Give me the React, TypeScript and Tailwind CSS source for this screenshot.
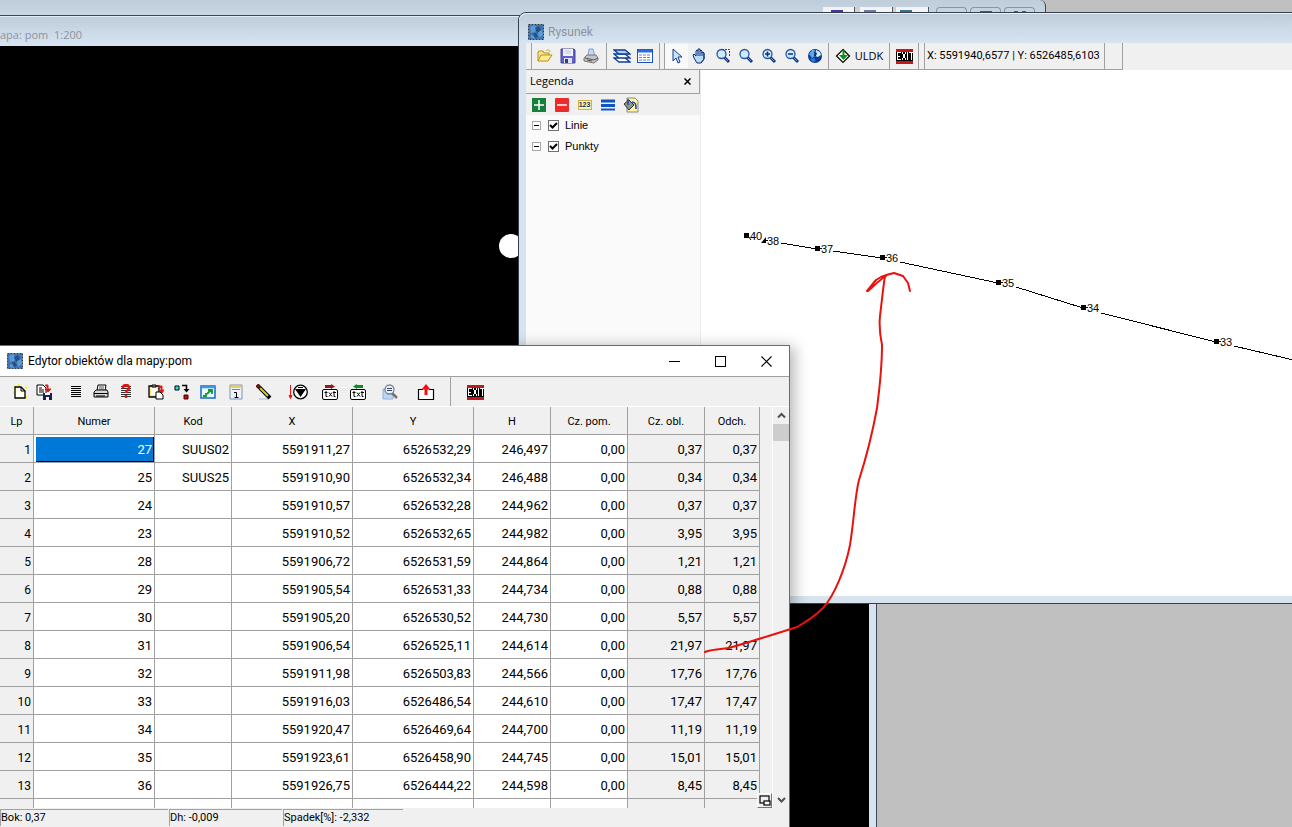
import type { ReactNode } from 'react'

type Row = {
  numer: string
  kod?: string
  x: string
  y: string
  h: string
  pom: string
  obl: string
  odch: string
}

const rows: Row[] = [
  { numer: '27', kod: 'SUUS02', x: '5591911,27', y: '6526532,29', h: '246,497', pom: '0,00', obl: '0,37', odch: '0,37' },
  { numer: '25', kod: 'SUUS25', x: '5591910,90', y: '6526532,34', h: '246,488', pom: '0,00', obl: '0,34', odch: '0,34' },
  { numer: '24', x: '5591910,57', y: '6526532,28', h: '244,962', pom: '0,00', obl: '0,37', odch: '0,37' },
  { numer: '23', x: '5591910,52', y: '6526532,65', h: '244,982', pom: '0,00', obl: '3,95', odch: '3,95' },
  { numer: '28', x: '5591906,72', y: '6526531,59', h: '244,864', pom: '0,00', obl: '1,21', odch: '1,21' },
  { numer: '29', x: '5591905,54', y: '6526531,33', h: '244,734', pom: '0,00', obl: '0,88', odch: '0,88' },
  { numer: '30', x: '5591905,20', y: '6526530,52', h: '244,730', pom: '0,00', obl: '5,57', odch: '5,57' },
  { numer: '31', x: '5591906,54', y: '6526525,11', h: '244,614', pom: '0,00', obl: '21,97', odch: '21,97' },
  { numer: '32', x: '5591911,98', y: '6526503,83', h: '244,566', pom: '0,00', obl: '17,76', odch: '17,76' },
  { numer: '33', x: '5591916,03', y: '6526486,54', h: '244,610', pom: '0,00', obl: '17,47', odch: '17,47' },
  { numer: '34', x: '5591920,47', y: '6526469,64', h: '244,700', pom: '0,00', obl: '11,19', odch: '11,19' },
  { numer: '35', x: '5591923,61', y: '6526458,90', h: '244,745', pom: '0,00', obl: '15,01', odch: '15,01' },
  { numer: '36', x: '5591926,75', y: '6526444,22', h: '244,598', pom: '0,00', obl: '8,45', odch: '8,45' },
]

const columns = [
  { label: 'Lp', width: 'w-[34px]' },
  { label: 'Numer', width: 'w-[121px]' },
  { label: 'Kod', width: 'w-[77px]' },
  { label: 'X', width: 'w-[121px]' },
  { label: 'Y', width: 'w-[121px]' },
  { label: 'H', width: 'w-[77px]' },
  { label: 'Cz. pom.', width: 'w-[77px]' },
  { label: 'Cz. obl.', width: 'w-[77px]' },
  { label: 'Odch.', width: 'w-[55px]' },
]

const points = [
  { label: '37', x: 818, y: 249 },
  { label: '36', x: 883, y: 258 },
  { label: '35', x: 999, y: 283 },
  { label: '34', x: 1084, y: 308 },
  { label: '33', x: 1217, y: 342 },
]

function Icon({ children, size = 16 }: { children: ReactNode; size?: number }) {
  return (
    <svg width={size} height={size} viewBox={`0 0 ${size} ${size}`} fill="none" aria-hidden="true" className="shrink-0">
      {children}
    </svg>
  )
}

function AppIcon() {
  return (
    <Icon>
      <rect width="16" height="16" fill="#3f74b0" />
      <path d="M2 3l4-2 3 3-2 4-4 1zM10 8l4-2 1 5-4 3zM3 11l3 1 1 3-4-1z" fill="#5b9ad6" />
      <path d="M7 4l4-2 2 4-4 3zM5 9l3 0 2 4-3 1z" fill="#234f86" />
      <rect x="0.5" y="0.5" width="15" height="15" stroke="#1f3c5e" strokeDasharray="2 1" />
      <rect x="0.5" y="0.5" width="15" height="15" stroke="#b9a98a" strokeDasharray="1 2" strokeDashoffset="1" />
    </Icon>
  )
}

function ExitIcon() {
  return (
    <svg width="17" height="16" viewBox="0 0 17 16" fill="none" aria-hidden="true" shapeRendering="crispEdges">
      <rect y="1" width="17" height="14" fill="#000" />
      <path d="M0 2h17M0 14h17" stroke="#c4161c" strokeWidth="3" />
      <path d="M1 4.500h4M1 8h3M1 11.500h4M1.500 4v8M6 4l4 8M10 4l-4 8M11.500 4v8M13 4.500h4M15 4v8" stroke="#fff" />
    </svg>
  )
}

function Magnifier({ children }: { children?: ReactNode }) {
  return (
    <Icon>
      <path d="M9 9l5 5" stroke="#123a7a" strokeWidth="3" />
      <path d="M9.500 9.500l3.500 3.500" stroke="#6b94cf" />
      <circle cx="6.500" cy="6" r="4.500" fill="#cfe8fb" stroke="#2456a4" strokeWidth="1.300" />
      {children}
    </Icon>
  )
}

const OpenIcon = () => (
  <Icon>
    <path d="M1 13V4l1-1h4l1 2h5v2" fill="#fbe58c" stroke="#bb8e16" />
    <path d="M1 13l3-6h11l-4 6z" fill="#ffec94" stroke="#bb8e16" />
    <path d="M9 3c2-2 4-1 4 1" stroke="#d7a928" />
  </Icon>
)

const SaveIcon = () => (
  <Icon>
    <path d="M1 1h13l1 1v13H1z" fill="#6260c4" stroke="#46449c" />
    <path d="M3 1h10v7H3z" fill="#eef0fa" />
    <path d="M5 3h6M5 5h6" stroke="#c3c6da" />
    <path d="M4 10h8v5H4z" fill="#dfe1ef" />
    <path d="M5 11h3v4H5z" fill="#3b3987" />
  </Icon>
)

const PrintIcon = () => (
  <Icon>
    <path d="M5 8l1-7h4l2 7z" fill="#c3d6ff" stroke="#8a9fc9" />
    <path d="M1 10l3-3h9l2 3v2l-4 3-10-2z" fill="#c4c4c4" stroke="#777" />
    <path d="M2 10l9 2 4-2M4 12l5 1" stroke="#555" />
  </Icon>
)

const LayersIcon = () => (
  <svg width="18" height="16" viewBox="0 0 18 16" fill="none" aria-hidden="true">
    <path d="M1 10h11l5 4H6zM1 6h11l5 4H6z" fill="#fff" stroke="#0f3c94" strokeWidth="1.300" />
    <path d="M1 2h11l5 4H6z" fill="#a9d1f4" stroke="#0f3c94" strokeWidth="1.300" />
  </svg>
)

const GridIcon = () => (
  <Icon>
    <rect x="0.500" y="1.500" width="15" height="13" fill="#fff" stroke="#1a53b5" />
    <path d="M1 3h14" stroke="#2a6be0" strokeWidth="3" />
    <path d="M2 7h12M2 9.500h12M2 12h12" stroke="#5f86c8" strokeDasharray="3 1" />
  </Icon>
)

const CursorIcon = () => (
  <Icon>
    <path d="M4 1v12l3-3 2 5 2-1-2-5h4z" fill="#c9e4ff" stroke="#123d8c" />
  </Icon>
)

const HandIcon = () => (
  <Icon>
    <path d="M5 15l-3-5-1-3 1-1 2 2V3l1-1 1 1V1h2v2l1-1 1 1v2l1-1 1 1v6l-3 4z" fill="#b9dcfa" stroke="#0e2f78" />
    <path d="M6 3v5M8 3v5M10 4v4M12 5v6l-3 4" stroke="#0e2f78" />
  </Icon>
)

const GlobeIcon = () => (
  <Icon>
    <circle cx="8" cy="8" r="7" fill="#0c3d94" />
    <path d="M2 6l3-4 3 0-1 3 1 3-3 2z" fill="#5aa9ea" />
    <path d="M9 2l4 2 1 3-3 2-3-1z" fill="#d3ecff" />
    <path d="M3 11l4-1 2 3-3 1z" fill="#2f7bd4" />
    <path d="M8 4l2 1-1 3-2 0z" fill="#0a2a70" />
  </Icon>
)

const UldkIcon = () => (
  <Icon>
    <path d="M8 1.500l6.500 6.500L8 14.500 1.500 8z" fill="#fff" stroke="#000" strokeWidth="1.200" />
    <path d="M8.500 2v6" stroke="#0b8f16" strokeWidth="2" />
    <path d="M4 7h9l-4.500 5z" fill="#0b8f16" />
  </Icon>
)

const NewIcon = () => (
  <Icon>
    <path d="M2 2l3 3M15 3l-2 1M1 9h2M13 12l2 2M7 0v2" stroke="#ffee3a" strokeWidth="2" />
    <path d="M3 3h6l4 4v7H3z" fill="#fffff0" stroke="#000" strokeWidth="1.300" />
    <path d="M9 3v4h4" stroke="#000" />
  </Icon>
)

const SaveAsIcon = () => (
  <Icon>
    <path d="M1 1h6l3 3v7H1z" fill="#fff" stroke="#000" />
    <path d="M3 4h3M3 6h5M3 8h5" stroke="#000" />
    <path d="M9 1h3v4M9 5h6l-3 3z" fill="#e01818" stroke="#e01818" />
    <path d="M7 9h9v7H7z" fill="#1d1d5c" />
    <path d="M9 9h5v2H9zM10 13h3v3h-3z" fill="#fff" />
  </Icon>
)

const LinesIcon = () => (
  <Icon>
    <path d="M3 2.500h10M3 4.500h10M3 6.500h10M3 8.500h10M3 10.500h10M3 12.500h10" stroke="#000" shapeRendering="crispEdges" />
  </Icon>
)

const PrinterIcon = () => (
  <Icon>
    <path d="M4 7l1-6h8l-1 6" fill="#fff" stroke="#000" />
    <path d="M6 3h5M6 5h5" stroke="#555" />
    <path d="M1 8l2-2h11l1 2v5H1z" fill="#d8d8d8" stroke="#000" />
    <path d="M1 9.500h14M3 12h9" stroke="#000" />
  </Icon>
)

const HelpListIcon = () => (
  <Icon>
    <path d="M3 2.500h10M3 4.500h10M3 6.500h10M3 8.500h10M3 10.500h10M3 12.500h10" stroke="#333" />
    <path d="M5 4c0-4 6-4 6 0 0 2-3 2-3 5M8 11v3" stroke="#ee1111" strokeWidth="2.400" />
  </Icon>
)

const PasteIcon = () => (
  <Icon>
    <path d="M1 2h10v11H1z" fill="#f7e77f" stroke="#000" strokeWidth="1.300" />
    <path d="M3 4h6v7H3z" fill="#fff" />
    <path d="M4 1h4v2H4z" fill="#aaa" stroke="#000" />
    <path d="M10 2h4v4M11 6h5l-2 3z" fill="#e01818" stroke="#e01818" />
    <path d="M8 8h4l3 3v4H8z" fill="#fff" stroke="#000" />
  </Icon>
)

const SwapIcon = () => (
  <Icon>
    <path d="M1 2h4v4H1z" fill="#2fe3e3" stroke="#000" />
    <path d="M8 1.500h4.500V5" stroke="#000" strokeWidth="1.500" />
    <path d="M9.500 5h6l-3 3.500z" fill="#000" />
    <path d="M10 11h4v4h-4z" fill="#b31313" stroke="#500" />
  </Icon>
)

const ExpandIcon = () => (
  <Icon>
    <path d="M1 2h14v12H1z" fill="#e8fbff" stroke="#1766c8" strokeWidth="1.500" />
    <path d="M1 3h14" stroke="#3c94ee" strokeWidth="2.500" />
    <path d="M3 12h3V9M7 10l4-4M8 6h4v4" stroke="#129b2a" strokeWidth="1.800" />
  </Icon>
)

const DayIcon = () => (
  <Icon>
    <path d="M2 1h12v14H2z" fill="#eef3fb" stroke="#7d93b8" />
    <path d="M2 2h12v2H2z" fill="#e9cf57" />
    <path d="M4 5.500h8" stroke="#6c86b3" />
    <path d="M6 8.500h2.500v4.500M6.500 13.500h4" stroke="#000" />
  </Icon>
)

const PencilIcon = () => (
  <Icon>
    <path d="M3 15h9" stroke="#9db4e0" />
    <path d="M1 1l13 13" stroke="#000" strokeWidth="4" />
    <path d="M4 4l8 8" stroke="#cfcf28" strokeWidth="2" />
    <path d="M1 1l3 3" stroke="#7a1010" strokeWidth="3" />
  </Icon>
)

const SortIcon = () => (
  <svg width="20" height="16" viewBox="0 0 20 16" fill="none" aria-hidden="true">
    <path d="M2.500 1v12M1 11.500h3l-1.500 3z" stroke="#e81616" fill="#e81616" />
    <circle cx="12.500" cy="8" r="6.800" fill="#fff" stroke="#000" strokeWidth="1.300" />
    <path d="M7 5h11l-5.500 8z" fill="#000" />
    <path d="M10 3.500h5" stroke="#000" />
  </svg>
)

function TxtIcon({ color, left }: { color: string; left?: boolean }) {
  return (
    <svg width="18" height="16" viewBox="0 0 18 16" fill="none" aria-hidden="true">
      <path d={left ? 'M14 1h-6V0L4 2.500 8 5V4h6z' : 'M4 1h6V0l4 2.500L10 5V4H4z'} fill={color} />
      <rect x="1.500" y="5.500" width="15" height="10" rx="1.500" fill="#fff" stroke="#000" />
      <path d="M5 7v5.500h1.500M3.500 8.500h3M8 8.500l3 4M11 8.500l-3 4M13 7v5.500h1.500M12 8.500h3" stroke="#000" />
    </svg>
  )
}

const PreviewIcon = () => (
  <Icon>
    <path d="M1 5h8l2 2v8H1z" fill="#bfd5f5" stroke="#92aedb" />
    <path d="M10 9l5 5" stroke="#7c6d6d" strokeWidth="2.500" />
    <circle cx="7.500" cy="5.500" r="4.500" fill="#eef3fb" stroke="#77839a" strokeWidth="1.300" />
    <path d="M5 4.500h5M5 6.500h5" stroke="#33415e" />
  </Icon>
)

const ExportIcon = () => (
  <svg width="18" height="16" viewBox="0 0 18 16" fill="none" aria-hidden="true">
    <path d="M6 5.500H1.500v10h15v-10H12" fill="#fff" stroke="#000" strokeWidth="1.200" />
    <path d="M9 11V4" stroke="#f01010" strokeWidth="3" />
    <path d="M4.500 5.500L9 0l4.500 5.500z" fill="#f01010" />
  </svg>
)

function ToolButton({ label, children }: { label: string; children: ReactNode }) {
  return (
    <button type="button" aria-label={label} className="flex h-6 w-6 shrink-0 items-center justify-center">
      {children}
    </button>
  )
}

function SmallTool({ label, active, children }: { label: string; active?: boolean; children: ReactNode }) {
  return (
    <button
      type="button"
      aria-label={label}
      className={`flex h-6 w-[23px] shrink-0 items-center justify-center ${active ? 'bg-[#f9f9f9]' : ''}`}
    >
      {children}
    </button>
  )
}

const Divider = () => <div className="w-px shrink-0 self-stretch bg-[#a0a0a0]" />

function TreeItem({ label }: { label: string }) {
  return (
    <li className="flex h-[21px] items-center pl-[6px]">
      <button type="button" aria-label={`Zwiń ${label}`} className="flex h-[9px] w-[9px] items-center justify-center border border-[#a8a8a8] bg-white">
        <span className="h-px w-[5px] bg-black" />
      </button>
      <label className="relative ml-[7px] flex items-center gap-[6px] text-[11px]">
        <input type="checkbox" defaultChecked className="h-[11px] w-[11px] appearance-none border border-[#707070] bg-white" />
        <svg width="11" height="11" viewBox="0 0 11 11" fill="none" className="pointer-events-none absolute left-0" aria-hidden="true">
          <path d="M2 5l2.500 2.500L9 3" stroke="#000" strokeWidth="2" />
        </svg>
        {label}
      </label>
    </li>
  )
}

function MapWindow() {
  return (
    <>
      <div className="absolute top-0 left-0 flex h-4 w-[1046px] items-end justify-end gap-[3px] rounded-tr-md border-r border-[#3b4754] bg-linear-to-b from-[#bfcddb] to-[#c9d7e5] pr-[10px] pb-[3px]">
        <div className="flex h-[6px] w-[32px] justify-start border-r border-[#555] bg-[#f4f4f4] pt-[3px] pl-2"><span className="h-1 w-3 bg-[#4533a8]" /></div>
        <div className="ml-[2px] flex h-[6px] w-[33px] justify-start border-r border-[#555] bg-[#f4f4f4] pt-[3px] pl-1"><span className="h-1 w-3 bg-[#7279ad]" /></div>
        <div className="mr-[4px] flex h-[6px] w-[33px] justify-start border-r border-[#555] bg-[#f4f4f4] pt-[3px] pl-1"><span className="h-1 w-3 bg-[#3b6f93]" /></div>
        <div className="h-[6px] w-[31px] rounded-t-sm border border-b-0 border-[#8296ae]" />
        <div className="flex h-[6px] w-[31px] justify-center rounded-t-sm border border-b-0 border-[#8296ae] pt-[3px]"><span className="h-1 w-3 bg-[#4d5a6b]" /></div>
        <div className="flex h-[6px] w-[31px] justify-center gap-1 rounded-t-sm border border-b-0 border-[#8296ae] pt-[3px]"><span className="h-1 w-1 bg-[#4d5a6b]" /><span className="h-1 w-1 bg-[#4d5a6b]" /></div>
      </div>
      <section className="absolute top-[15px] bottom-0 left-0 flex w-[877px] flex-col border-t border-r border-[#3b4754] bg-[#d7e4f0]">
        <h2 className="h-[30px] shrink-0 border-t border-[#e4edf5] bg-linear-to-b from-[#bfcddb] to-[#d7e4f2] pt-[10px] font-['Open_Sans','Noto_Sans',sans-serif] text-[11px] leading-4 whitespace-pre text-[#8c949c]">apa: pom  1:200</h2>
        <div className="mr-[7px] grow bg-black" />
      </section>
      <div className="absolute top-[234px] left-[499px] h-6 w-6 rounded-full bg-white" />
    </>
  )
}

function DrawingWindow() {
  return (
    <section className="absolute top-[12px] -right-2 left-[518px] flex h-[592px] flex-col rounded-tl-lg border border-[#35404c] bg-[#d7e4f0] pb-[7px] pl-[7px]">
      <header className="-ml-[7px] flex h-[30px] shrink-0 items-center gap-1 rounded-tl-lg border-t border-[#eaf1f8] bg-linear-to-b from-[#bfcddb] to-[#d7e4f2] pt-[6px] pl-[9px]">
        <AppIcon />
        <h2 className="font-['Roboto',sans-serif] text-[12px] text-[#8c949c]">Rysunek</h2>
      </header>
      <div className="flex h-[27px] shrink-0 bg-[#f0f0f0] font-['Open_Sans','Noto_Sans',sans-serif] text-[11px]">
        <div className="flex items-center border-r border-b border-[#a0a0a0] pl-[5px]">
          <Divider />
          <div className="mr-1 ml-px flex">
            <SmallTool label="Otwórz"><OpenIcon /></SmallTool>
            <SmallTool label="Zapisz"><SaveIcon /></SmallTool>
            <SmallTool label="Drukuj"><PrintIcon /></SmallTool>
          </div>
          <Divider />
          <div className="mx-[3px] flex">
            <SmallTool label="Warstwy"><LayersIcon /></SmallTool>
            <SmallTool label="Tabela"><GridIcon /></SmallTool>
          </div>
          <Divider />
          <div className="mr-1" />
          <Divider />
          <div className="mr-[2px] flex">
            <SmallTool label="Wskaż" active><CursorIcon /></SmallTool>
            <SmallTool label="Przesuń"><HandIcon /></SmallTool>
            <SmallTool label="Powiększ okno">
              <Magnifier><path d="M7 1.500h7.500V9" stroke="#1a3f8c" strokeDasharray="2 1" /></Magnifier>
            </SmallTool>
            <SmallTool label="Lupa"><Magnifier /></SmallTool>
            <SmallTool label="Powiększ"><Magnifier><path d="M4 6h5M6.500 3.500v5" stroke="#0c2f80" strokeWidth="1.500" /></Magnifier></SmallTool>
            <SmallTool label="Pomniejsz"><Magnifier><path d="M4 6h5" stroke="#0c2f80" strokeWidth="1.500" /></Magnifier></SmallTool>
            <SmallTool label="Cały rysunek"><GlobeIcon /></SmallTool>
          </div>
          <Divider />
          <button type="button" className="flex h-6 w-[60px] items-center justify-center gap-1">
            <UldkIcon />
            ULDK
          </button>
          <Divider />
          <div className="mx-[1px] flex w-[26px] justify-center">
            <ToolButton label="Wyjście"><ExitIcon /></ToolButton>
          </div>
          <Divider />
          <div className="mr-[5px]" />
          <Divider />
          <output className="w-[179px] pl-[2px] font-['Roboto',sans-serif] whitespace-nowrap">X: 5591940,6577 | Y: 6526485,6103</output>
          <Divider />
          <div className="w-[17px]" />
        </div>
      </div>
      <div className="flex min-h-0 grow">
        <aside className="flex w-[175px] shrink-0 flex-col border-r border-[#ececec] bg-[#fafafa] font-['Liberation_Sans',Arial,sans-serif]">
          <div className="flex h-6 items-center justify-between border-r border-b border-[#a0a0a0] bg-[#f0f0f0] pr-[6px] pl-1 font-['Open_Sans','Noto_Sans',sans-serif] text-[11px]">
            Legenda
            <button type="button" aria-label="Zamknij legendę" className="flex h-3 w-3 items-center justify-center">
              <svg width="7" height="7" viewBox="0 0 7 7" aria-hidden="true"><path d="M0.500 0.500l6 6M6.500 0.500l-6 6" stroke="#000" strokeWidth="1.500" /></svg>
            </button>
          </div>
          <div className="flex h-[21px] items-center bg-[#f0f0f0] pl-px">
            <SmallTool label="Dodaj">
              <Icon size={14}><rect width="14" height="14" fill="#15803c" /><path d="M7 2v10M2 7h10" stroke="#fff" strokeWidth="1.500" /></Icon>
            </SmallTool>
            <SmallTool label="Usuń">
              <Icon size={14}><rect width="14" height="14" rx="1" fill="#ee2b2b" /><path d="M2 7h10" stroke="#fff" strokeWidth="1.500" /></Icon>
            </SmallTool>
            <SmallTool label="Etykiety">
              <span className="flex h-[10px] w-[14px] items-center justify-center border border-[#d8b13c] bg-[#fff3a8] text-[7px] leading-none font-bold text-[#16336b]">123</span>
            </SmallTool>
            <SmallTool label="Styl linii">
              <Icon size={14}><path d="M0 3h14M0 7.500h14" stroke="#0f56c2" strokeWidth="3" /><path d="M0 11.500h14" stroke="#0f56c2" strokeWidth="2" /></Icon>
            </SmallTool>
            <SmallTool label="Wypełnienie">
              <Icon>
                <path d="M4 1h8l3 3v11H4z" fill="#fff6a0" stroke="#888" />
                <path d="M1 7l5-4 5 5-5 5z" fill="#8d938f" stroke="#333" />
                <path d="M5 2v6M9 5c4 0 4 3 4 7" stroke="#2d49a0" strokeWidth="1.600" />
              </Icon>
            </SmallTool>
          </div>
          <ul>
            <TreeItem label="Linie" />
            <TreeItem label="Punkty" />
          </ul>
        </aside>
        <div className="min-w-0 grow overflow-hidden bg-white">
          <svg width="600" height="520" viewBox="701 70 600 520" fontFamily="Liberation Sans, Arial, sans-serif" fontSize="11" role="img" aria-label="Rysunek mapy">
            <path d="M781 243L817 249M833 251L882 258M900 262L998 283M1016 287L1083 308M1101 313L1216 342M1234 346L1302 362" stroke="#000" fill="none" shapeRendering="crispEdges" />
            {points.map((p) => (
              <g key={p.label}>
                <rect x={p.x - 3} y={p.y - 3} width="5" height="5" />
                <path d={`M${p.x} ${p.y - 0.5}h4`} stroke="#000" />
                <text x={p.x + 3} y={p.y + 4}>{p.label}</text>
              </g>
            ))}
            <rect x="744" y="233" width="5" height="5" />
            <path d="M748 236l3 4" stroke="#000" />
            <text x="750" y="240">40</text>
            <path d="M761 243l5-6v6z" />
            <path d="M764 240.500h4" stroke="#000" />
            <text x="767" y="245">38</text>
          </svg>
        </div>
      </div>
    </section>
  )
}

function Cell({ children, gray }: { children?: ReactNode; gray?: boolean }) {
  return (
    <td className={`h-7 border-r border-b border-[#a0a0a0] p-0 pt-[2px] pr-[2px] text-right ${gray ? 'bg-[#f0f0f0]' : 'bg-white'}`}>
      {children}
    </td>
  )
}

function ObjectTable() {
  return (
    <table className="w-[760px] table-fixed border-separate border-spacing-0 font-['Roboto',sans-serif] text-[13px] leading-4">
      <thead>
        <tr>
          {columns.map((c) => (
            <th key={c.label} scope="col" className={`h-7 border-r border-b border-[#a0a0a0] bg-[#f0f0f0] p-0 pt-[2px] text-[11px] font-normal ${c.width}`}>
              {c.label}
            </th>
          ))}
        </tr>
      </thead>
      <tbody>
        {rows.map((r, i) => (
          <tr key={r.numer}>
            <th scope="row" className="h-7 border-r border-b border-[#a0a0a0] bg-[#f0f0f0] p-0 pt-[2px] pr-[2px] text-right text-[12px] font-normal">{i + 1}</th>
            {i === 0 ? (
              <td className="h-7 border-r border-b border-[#a0a0a0] bg-white p-0 pt-[2px] pl-[2px]">
                <div className="flex h-[25px] items-center justify-end border-r border-b border-black bg-[#0078d7] pt-px pr-px text-white">{r.numer}</div>
              </td>
            ) : (
              <Cell>{r.numer}</Cell>
            )}
            <Cell>{r.kod}</Cell>
            <Cell>{r.x}</Cell>
            <Cell>{r.y}</Cell>
            <Cell>{r.h}</Cell>
            <Cell>{r.pom}</Cell>
            <Cell gray>{r.obl}</Cell>
            <Cell gray>{r.odch}</Cell>
          </tr>
        ))}
        <tr>
          <Cell gray />
          <Cell />
          <Cell />
          <Cell />
          <Cell />
          <Cell />
          <Cell />
          <Cell gray />
          <Cell gray />
        </tr>
      </tbody>
    </table>
  )
}

function EditorWindow() {
  return (
    <section className="absolute top-[345px] bottom-0 left-0 flex w-[790px] flex-col border-t border-r border-[#6b6b6b] bg-[#f0f0f0] shadow-[4px_2px_14px_rgba(0,0,0,0.3)]">
      <header className="flex h-[31px] shrink-0 items-center border-b border-[#a0a0a0] bg-white pl-[7px]">
        <AppIcon />
        <h1 className="ml-[5px] grow font-['Roboto',sans-serif] text-[12px]">Edytor obiektów dla mapy:pom</h1>
        <button type="button" aria-label="Minimalizuj" className="flex h-7 w-[46px] items-center justify-center">
          <Icon size={11}><path d="M0 5.500h11" stroke="#000" /></Icon>
        </button>
        <button type="button" aria-label="Maksymalizuj" className="flex h-7 w-[46px] items-center justify-center">
          <Icon size={11}><rect x="0.500" y="0.500" width="10" height="10" stroke="#000" /></Icon>
        </button>
        <button type="button" aria-label="Zamknij" className="flex h-7 w-[46px] items-center justify-center">
          <Icon size={11}><path d="M0.500 0.500l10 10M10.500 0.500l-10 10" stroke="#000" strokeWidth="1.200" /></Icon>
        </button>
      </header>
      <div className="flex h-[30px] shrink-0 items-center border-b border-white pl-2">
        <ToolButton label="Nowy"><NewIcon /></ToolButton>
        <ToolButton label="Zapisz"><SaveAsIcon /></ToolButton>
        <div className="ml-2 flex gap-px">
          <ToolButton label="Lista"><LinesIcon /></ToolButton>
          <ToolButton label="Drukuj"><PrinterIcon /></ToolButton>
          <ToolButton label="Informacje"><HelpListIcon /></ToolButton>
        </div>
        <div className="ml-1.5 flex gap-[2px]">
          <ToolButton label="Wklej"><PasteIcon /></ToolButton>
          <ToolButton label="Zamień"><SwapIcon /></ToolButton>
          <ToolButton label="Pokaż"><ExpandIcon /></ToolButton>
        </div>
        <div className="ml-1 flex gap-1">
          <ToolButton label="Numeracja"><DayIcon /></ToolButton>
          <ToolButton label="Edytuj"><PencilIcon /></ToolButton>
        </div>
        <div className="ml-2.5 flex">
          <ToolButton label="Sortuj"><SortIcon /></ToolButton>
        </div>
        <div className="ml-2 flex gap-1">
          <ToolButton label="Eksport txt"><TxtIcon color="#9b1515" /></ToolButton>
          <ToolButton label="Import txt"><TxtIcon color="#128a20" left /></ToolButton>
        </div>
        <div className="ml-2 flex gap-3">
          <ToolButton label="Podgląd"><PreviewIcon /></ToolButton>
          <ToolButton label="Wyślij"><ExportIcon /></ToolButton>
        </div>
        <div className="mr-3 ml-3 flex self-stretch"><Divider /></div>
        <ToolButton label="Wyjście"><ExitIcon /></ToolButton>
      </div>
      <div className="flex min-h-0 grow">
        <div className="min-w-0 overflow-hidden">
          <ObjectTable />
        </div>
        <div className="relative flex grow justify-end">
          <div className="flex w-[17px] flex-col items-center border-l border-white">
            <button type="button" aria-label="Przewiń w górę" className="flex h-[17px] w-full items-center justify-center">
              <Icon size={9}><path d="M1 6.500L4.500 3 8 6.500" stroke="#505050" strokeWidth="2" /></Icon>
            </button>
            <div className="h-[17px] w-full bg-[#cdcdcd]" />
            <div className="grow" />
            <button type="button" aria-label="Przewiń w dół" className="flex h-[17px] w-full items-center justify-center">
              <Icon size={9}><path d="M1 3L4.500 6.500 8 3" stroke="#505050" strokeWidth="2" /></Icon>
            </button>
          </div>
          <button type="button" aria-label="Okno wiersza" className="absolute right-[17px] bottom-0 flex h-[15px] w-[15px] items-center justify-center border border-t-white border-l-white border-r-[#777] border-b-[#777] bg-[#f0f0f0]">
            <Icon size={12}>
              <rect x="1" y="1" width="9" height="7" stroke="#000" strokeWidth="1.200" />
              <rect x="5" y="6" width="6" height="4" fill="#fff" stroke="#000" strokeWidth="1.200" />
            </Icon>
          </button>
        </div>
      </div>
      <footer className="flex h-[19px] shrink-0 gap-px pt-px pb-px font-['Roboto',sans-serif] text-[11px] leading-4">
        <div className="w-[168px] border-t border-l border-[#a0a0a0]">Bok: 0,37</div>
        <div className="w-[113px] border-t border-l border-[#a0a0a0]">Dh: -0,009</div>
        <div className="w-[120px] border-t border-l border-[#a0a0a0]">Spadek[%]: -2,332</div>
      </footer>
    </section>
  )
}

export default function App() {
  return (
    <main className="relative h-screen overflow-hidden bg-[#c0c0c0] text-black">
      <MapWindow />
      <DrawingWindow />
      <EditorWindow />
      <svg width="220" height="400" viewBox="700 265 220 400" fill="none" stroke="#e8120f" strokeWidth="2" strokeLinecap="round" strokeLinejoin="round" className="pointer-events-none absolute top-[265px] left-[700px]" aria-hidden="true">
        <path d="M705 652C712 649 722 649 729 648C750 642 775 634 797 627C806 622 815 616 823 608C834 596 845 570 850 545C854 520 855 495 859 480C867 455 873 430 877 408C880 385 882 360 882 345C880 335 879 325 880 316C882 300 883 288 885 276" />
        <path d="M867 291L876 280L881 277L888 274.500L894 273L903 276L908 283L910 291M868 291C874 286 878 281 886 276" />
      </svg>
    </main>
  )
}
